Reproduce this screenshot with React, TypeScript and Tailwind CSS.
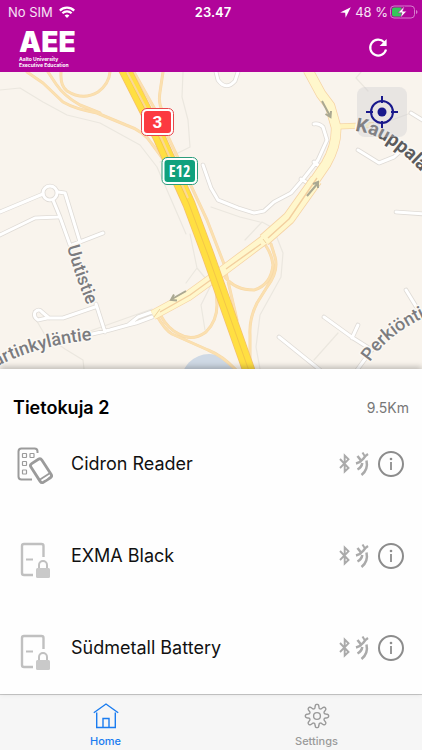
import React from 'react'

type DeviceProps = {
    name: string;
    kind: "reader" | "door";
};

const devices: readonly DeviceProps[] = [
    { name: "Cidron Reader", kind: "reader" },
    { name: "EXMA Black", kind: "door" },
    { name: "Südmetall Battery", kind: "door" },
];

// outline of the eight-toothed cog
const gearPath = Array.from({ length: 145 }, (_, i) => {
    const a = (i / 144) * Math.PI * 2;
    const r = 9.7 + 2.1 * Math.tanh(1.6 * Math.cos(8 * a));
    return `${i ? "L" : "M"}${(13 + r * Math.sin(a)).toFixed(2)} ${(13 - r * Math.cos(a)).toFixed(2)}`;
}).join("") + "Z";

function StatusBar() {
    return (
        <div className="grid h-6 grid-cols-3 items-center pl-2 pr-1 text-[13px] leading-4 text-white">
            <div className="flex items-center gap-1.5 text-white/90">
                <span>No SIM</span>
                <svg className="h-3 w-4" viewBox="0 0 16 12" fill="none" stroke="white" strokeWidth="2.2">
                    <path d="M.8 4.6a10.2 10.2 0 0 1 14.4 0" />
                    <path d="M3.4 7.3a6.5 6.5 0 0 1 9.2 0" />
                    <path d="M8 12 5.6 9.6a3.4 3.4 0 0 1 4.8 0Z" fill="white" stroke="none" />
                </svg>
            </div>
            <span className="text-center font-semibold">23.47</span>
            <div className="flex items-center justify-end gap-1 text-white/90">
                <svg className="size-[11px]" viewBox="0 0 11 11" fill="white">
                    <path d="M10.8.2.2 5.4l5 .4.4 5Z" />
                </svg>
                <span className="whitespace-nowrap">48 %</span>
                <svg className="-ml-0.5 h-[14px] w-7" viewBox="0 0 28 14">
                    <rect x=".5" y="1" width="24" height="12" rx="3.5" fill="none" stroke="#d77fce" />
                    <path d="M26 5v4c2-.8 2-3.2 0-4Z" fill="#d77fce" />
                    <path d="M4 2.5h7.5v9H4a2 2 0 0 1-2-2v-5a2 2 0 0 1 2-2Z" fill="#34c85a" />
                    <path d="M14.5 1.2 8 7.8h4l-1.5 5 6-6.6h-3.8Z" fill="white" stroke="#b1049a" strokeWidth=".5" />
                </svg>
            </div>
        </div>
    )
}

function Header() {
    return (
        <header className="bg-[#b1049a] text-white">
            <StatusBar />
            <div className="flex h-12 items-start justify-between pl-[19px] pr-8">
                <div className="pt-1">
                    <div className="text-[28px] font-black leading-7">AEE</div>
                    <div className="text-[5px] font-bold leading-[6px]">
                        <div>Aalto University</div>
                        <div>Executive Education</div>
                    </div>
                </div>
                <button type="button" aria-label="Refresh" className="mt-3 size-6">
                    <svg viewBox="0 0 24 24" fill="none" stroke="white" strokeWidth="2.2">
                        <path d="M18.200 6.300A8 8 0 1 0 20 13.500" />
                        <path d="M20.600 3v7h-7Z" fill="white" stroke="none" />
                    </svg>
                </button>
            </div>
        </header>
    )
}

const trails = [
    "M0 90 20 88 43 102 67 115 100 123 140 145 157 167 180 220 186 234",
    "M183 72 182 97 188 120 190 147 160 162",
    "M190 234 197 268 211 285 201 305 205 330 M197 268 186 283",
    "M274 230 283 253 281 277 260 315 256 347 260 369",
    "M211 207 240 217 260 222 M245 240 262 222 275 229",
    "M361 72 356 78 368 91 M378 125 411 113 M338 333 314 360",
    "M35 318 45 335 65 349 83 360 84 369 M90 331 152 309",
];

const whiteRoads = [
    "M0 212 43 194 M53 200 60 217 70 245 M58 192 65 193 80 242 M0 235 35 218 58 217 M72 245 103 233",
    "M95 307 63 318 47 318 38 320Q33 317 35 312 39 308 42 312L49 318 M96 304 105 332",
    "M88 335 110 330 128 325 138 317 152 312 M128 325 136 323 152 317",
    "M216 72 218 80Q226 91 235 81L238 72",
    "M203 165 211 188 218 200 238 208 254 213 264 211 274 202 291 193 304 178 318 160 327 140 323 127Q319 123 314 124",
    "M314 162 323 169 M301 179 311 185",
    "M358 150 379 163 394 157 404 148 M411 113 424 121 M396 212 424 214",
    "M406 290 417 308 M324 317 353 338 372 350 M358 325 352 338 M279 337 320 370 M368 355 357 370",
];

const ramps = [
    "M27 72 43 83 63 102Q75 109 97 113L126 125Q144 131 152 144L177 178",
    "M48 72 56 84Q64 96 80 105L100 113",
    "M61 72Q60 86 67 91 83 101 98 92 109 84 110 72",
    "M163 72 160 92Q158 104 163 112",
    "M134 72 157 113 207 220 224 264 237 320",
    "M157 316Q165 330 172 334L208 350Q223 356 237 371",
    "M161 316Q168 329 179 334 192 342 206 332 217 321 217 305L216 286",
    "M225 277Q235 290 254 290 271 285 273 265 272 255 266 246",
    "M271 244 275 257Q279 271 267 287L257 303Q249 319 250 335V360",
];

const avenue = "M153 315 188 296 224 270 264 240 289 218 326 164Q337 145 336 127L330 106 321 94 308 70";
const motorway = "M124 68 159 137 189 204 208 255 249 371";
const arrows = [
    "M322 101 330 116 M325.500 114 330.500 117 331 111",
    "M307 196 318 183 M313 184 318 182 318 188",
    "M186 291 172 299 M174 294.500 171 300 177 300.500",
];

function MapView() {
    return (
        <section aria-label="Map" className="relative h-[297px] overflow-hidden bg-[#f9f4ed]">
            <svg className="h-full w-full" viewBox="0 72 422 297" preserveAspectRatio="xMidYMid slice" fill="none" strokeLinejoin="round" strokeLinecap="round">
                <path d={trails.join("")} stroke="#ebe7df" strokeWidth="1.2" />
                <circle cx="209" cy="382" r="28" fill="#cfd9e5" />

                <path d={whiteRoads.join("")} stroke="#dfdbd6" strokeWidth="4.600" />
                <circle cx="50" cy="193" r="7" stroke="#dfdbd6" strokeWidth="4.600" />
                <path d={whiteRoads.join("")} stroke="#fff" strokeWidth="3" />
                <circle cx="50" cy="193" r="7" stroke="#fff" strokeWidth="3" />

                <path d={ramps.join("")} stroke="#f8d9a8" strokeWidth="3" />
                <path d={ramps.join("")} stroke="#fbe0b0" strokeWidth="2" />

                <g strokeLinecap="butt">
                    <path d="M338 126.500 374 125" stroke="#f5d5a8" strokeWidth="6" />
                    <path d={avenue} stroke="#f6d3a4" strokeWidth="10.500" />
                    <path d="M264 240 289 218 316 180" stroke="#f6d3a4" strokeWidth="13" />
                    <path d="M264 240 289 218 316 180" stroke="#fff7cc" strokeWidth="11.500" />
                    <path d="M338 126.500 374 125" stroke="#fff3bf" strokeWidth="4.500" />
                    <path d={avenue} stroke="#fff7cc" strokeWidth="9" />
                    <path d="M160 312 190 295 219 274 M226 269 261 244 M268 238 289 219 317 178" stroke="#f3cf9f" strokeWidth="1.400" />
                    <path d="M154 317 160 309 M263 239 266 243" stroke="#efd19a" />
                    <path d={motorway} stroke="#f5c169" strokeWidth="13" />
                    <path d={motorway} stroke="#ffdf42" strokeWidth="11.500" />
                    <path d={motorway} stroke="#f0c04a" strokeWidth=".8" />
                    <path d="M127 72 159 133 188 198" stroke="#fbd896" strokeWidth="2" />
                </g>
                <path d={arrows.join("")} stroke="#aaa892" strokeWidth="2" strokeLinecap="butt" strokeLinejoin="miter" />

                <defs>
                    <path id="uutistie" d="M67 247Q74 274 90 312" />
                    <path id="martinkylantie" d="M-60 390 0 365Q40 345 92 340" />
                    <path id="kauppala" d="M355 131C378 133 402 149 434 186" />
                    <path id="perkiontie" d="M370 362Q390 332 430 315" />
                </defs>
                <g className="font-['Roboto',sans-serif] font-medium" fill="#7c7c7f" stroke="#fbf8f3" strokeWidth="3" paintOrder="stroke">
                    <text className="text-[18px]"><textPath href="#uutistie">Uutistie</textPath></text>
                    <text className="text-[18px]" textAnchor="end"><textPath href="#martinkylantie" startOffset="100%">Martinkyläntie</textPath></text>
                    <text className="text-[19px] font-bold" fill="#5c5c5e"><textPath href="#kauppala">Kauppala</textPath></text>
                    <text className="text-[18px]"><textPath href="#perkiontie">Perkiöntie</textPath></text>
                </g>

                <g className="font-['Roboto',sans-serif] font-bold" textAnchor="middle">
                    <rect x="141.500" y="108.500" width="32" height="27" rx="5" fill="#fff" stroke="#e8474a" />
                    <rect x="144" y="111" width="27" height="22" rx="3" fill="#fc3a40" />
                    <text className="text-[17px]" x="157.500" y="128" fill="#fff">3</text>
                    <rect x="162" y="157.500" width="35.500" height="27" rx="5" fill="#fff" stroke="#2c9c7c" />
                    <rect x="164.500" y="160" width="30.500" height="22" rx="3" fill="#0fa17d" />
                    <text className="font-['Open_Sans_Condensed','Roboto_Condensed','Roboto',sans-serif] text-[16px]" x="179.500" y="177" fill="#fff">E12</text>
                </g>
            </svg>
            <button type="button" aria-label="Locate me" className="absolute right-[15px] top-[15px] flex size-[50px] items-center justify-center rounded-lg bg-[#c9c9cd]/35">
                <svg className="size-8" viewBox="0 0 32 32" fill="none" stroke="#19198c" strokeWidth="2">
                    <circle cx="16" cy="16" r="11" />
                    <circle cx="16" cy="16" r="4.500" fill="#19198c" stroke="none" />
                    <path d="M16 0v7M16 25v7M0 16h7M25 16h7" />
                </svg>
            </button>
        </section>
    )
}

function ReaderIcon() {
    return (
        <svg className="h-[46px] w-10" viewBox="0 -4 40 46" fill="none" stroke="#9b9b9b">
            <path d="M22.500 8V6.500a3 3 0 0 0-3-3h-13a3 3 0 0 0-3 3v25a3 3 0 0 0 3 3H17" strokeWidth="2" />
            <g strokeWidth="1.200">
                <rect x="7.500" y="8.500" width="4" height="4" rx=".5" />
                <rect x="15" y="8.500" width="4" height="4" rx=".5" />
                <rect x="7.500" y="16.500" width="4" height="4" rx=".5" />
                <rect x="7.500" y="25" width="4" height="4" rx=".5" />
            </g>
            <g transform="rotate(-33 26 25.700)">
                <rect x="19.500" y="14.700" width="13" height="22" rx="2.500" fill="#fff" strokeWidth="2.800" />
                <path d="M20 32.500h12" strokeWidth="1.800" />
                <path d="M24 34.800h4" stroke="#fff" strokeWidth="1.200" />
            </g>
        </svg>
    )
}

function DoorIcon() {
    return (
        <svg className="h-[46px] w-10" viewBox="0 -4 40 46" fill="none" stroke="#c0c0c0">
            <path d="M28.500 20V9a2 2 0 0 0-2-2H9a2 2 0 0 0-2 2v27a2 2 0 0 0 2 2h9" strokeWidth="2.400" />
            <path d="M11 22.500h7" strokeWidth="2" />
            <path d="M24 32v-4a4 4 0 0 1 8 0v4" strokeWidth="2" />
            <rect x="21" y="31" width="14" height="10" rx="1.500" fill="#c9c9c9" stroke="none" />
        </svg>
    )
}

function DeviceRow({ name, kind }: DeviceProps) {
    return (
        <li className="flex h-[92px] items-center pl-[15px] pr-[17px]">
            {kind === "reader" ? <ReaderIcon /> : <DoorIcon />}
            <span className="ml-4 flex-1 text-[18px] leading-6 text-[#111]">{name}</span>
            <svg className="h-[26px] w-8" viewBox="0 0 32 26" fill="none" stroke="#aaa">
                <path d="m1 8 8.500 9L5.700 20.500V4.500l3.800 3.800L1 17" strokeWidth="1.900" />
                <g strokeWidth="2.500">
                    <path d="M17 12.500c3-.8 5.300-2.300 7-4.500 1.300-1.800 2.500-3.500 5-5" />
                    <path d="M18.500 5 22 9.500" />
                    <path d="M23.500 1.500 26.300 6" strokeWidth="2" />
                    <path d="M18.500 18.500c2.700-1.400 4.300-3.500 4.800-6.500" />
                    <path d="M22.500 24c4.500-3.500 6.300-8.500 5-14.500" />
                </g>
            </svg>
            <button type="button" aria-label={`About ${name}`} className="ml-1.5 size-7">
                <svg viewBox="0 0 28 28" fill="none" stroke="#8c8c8c" strokeWidth="2">
                    <circle cx="14" cy="14" r="12" />
                    <path d="M14 12v8" strokeWidth="1.800" />
                    <circle cx="14" cy="9" r="1.300" fill="#8c8c8c" stroke="none" />
                </svg>
            </button>
        </li>
    )
}

function TabBar() {
    return (
        <nav className="grid h-14 grid-cols-2 border-t border-[#cacaca] bg-[#f6f6f6] text-[11px] font-medium leading-4">
            <a href="#home" aria-current="page" className="flex flex-col items-center pt-2 text-[#1a7cf0]">
                <svg className="size-[26px]" viewBox="0 0 26 26" fill="none" stroke="currentColor" strokeWidth="1.400">
                    <path d="M.8 9.800 13 1l12.200 8.800M3.700 9.500v15h18.600v-15M10 24.500v-9h6v9" />
                </svg>
                <span className="pt-1">Home</span>
            </a>
            <a href="#settings" className="flex flex-col items-center pt-2 text-[#9a9a9a]">
                <svg className="size-[26px]" viewBox="0 0 26 26" fill="none" stroke="currentColor" strokeWidth="1.400">
                    <path d={gearPath} />
                    <circle cx="13" cy="13" r="3.400" />
                </svg>
                <span className="pt-1">Settings</span>
            </a>
        </nav>
    )
}

function App() {
    return (
        <div className="flex min-h-screen flex-col bg-white font-['Inter',sans-serif]">
            <Header />
            <MapView />
            <main className="relative flex-1 bg-[#fefefe] shadow-[0_-2px_6px_rgba(0,0,0,0.25)]">
                <div className="flex h-[49px] items-end justify-between px-[13px]">
                    <h1 className="text-[18px] font-semibold leading-5 text-black">Tietokuja 2</h1>
                    <span className="text-[14px] leading-5 text-[#777]">9.5Km</span>
                </div>
                <ul>
                    {devices.map((device) => (
                        <DeviceRow key={device.name} {...device} />
                    ))}
                </ul>
            </main>
            <TabBar />
        </div>
    )
}

export default App
